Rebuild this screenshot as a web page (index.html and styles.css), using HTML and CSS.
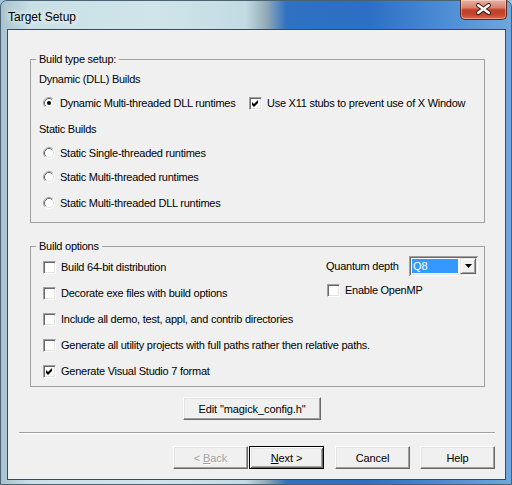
FILE: index.html
```html
<!DOCTYPE html>
<html>
<head>
<meta charset="utf-8">
<link rel="stylesheet" href="styles.css">
</head>
<body>
<div class="window">
  <div class="titlebar">
    <span class="title">Target Setup</span>
    <div class="close">
      <svg width="47" height="19" viewBox="0 0 47 19">
        <path d="M18 5 L29 13 M29 5 L18 13" stroke="#3a1c16" stroke-width="4.6" stroke-linecap="round" fill="none"/>
        <path d="M18 5 L29 13 M29 5 L18 13" stroke="#ffffff" stroke-width="2.6" stroke-linecap="round" fill="none"/>
      </svg>
    </div>
  </div>
  <div class="client">
    <fieldset class="group">
      <legend>Build type setup:</legend>
      <div class="type-body">
        <div class="row">Dynamic (DLL) Builds</div>
        <div class="row opt">
          <label class="choice radio-wide">
            <svg class="rb" width="12" height="12" viewBox="0 0 12 12">
              <circle cx="6" cy="6" r="5" fill="#fff"/>
              <path d="M2.11 9.89 A5.5 5.5 0 0 1 9.89 2.11" stroke="#a0a0a0" fill="none"/>
              <path d="M9.89 2.11 A5.5 5.5 0 0 1 2.11 9.89" stroke="#ffffff" fill="none"/>
              <path d="M2.82 9.18 A4.5 4.5 0 0 1 9.18 2.82" stroke="#696969" fill="none"/>
              <path d="M9.18 2.82 A4.5 4.5 0 0 1 2.82 9.18" stroke="#e3e3e3" fill="none"/>
              <circle cx="6" cy="6" r="2" fill="#000"/>
            </svg>
            <span>Dynamic Multi-threaded DLL runtimes</span>
          </label>
          <label class="choice">
            <span class="cb"><svg width="7" height="7" viewBox="0 0 7 7"><path d="M0 2 L2 4 L6 0 L6 3 L2 7 L0 5 Z" fill="#000"/></svg></span>
            <span>Use X11 stubs to prevent use of X Window</span>
          </label>
        </div>
        <div class="row sec">Static Builds</div>
        <div class="row opt">
          <label class="choice">
            <svg class="rb" width="12" height="12" viewBox="0 0 12 12">
              <circle cx="6" cy="6" r="5" fill="#fff"/>
              <path d="M2.11 9.89 A5.5 5.5 0 0 1 9.89 2.11" stroke="#a0a0a0" fill="none"/>
              <path d="M9.89 2.11 A5.5 5.5 0 0 1 2.11 9.89" stroke="#ffffff" fill="none"/>
              <path d="M2.82 9.18 A4.5 4.5 0 0 1 9.18 2.82" stroke="#696969" fill="none"/>
              <path d="M9.18 2.82 A4.5 4.5 0 0 1 2.82 9.18" stroke="#e3e3e3" fill="none"/>
            </svg>
            <span>Static Single-threaded runtimes</span>
          </label>
        </div>
        <div class="row opt">
          <label class="choice">
            <svg class="rb" width="12" height="12" viewBox="0 0 12 12">
              <circle cx="6" cy="6" r="5" fill="#fff"/>
              <path d="M2.11 9.89 A5.5 5.5 0 0 1 9.89 2.11" stroke="#a0a0a0" fill="none"/>
              <path d="M9.89 2.11 A5.5 5.5 0 0 1 2.11 9.89" stroke="#ffffff" fill="none"/>
              <path d="M2.82 9.18 A4.5 4.5 0 0 1 9.18 2.82" stroke="#696969" fill="none"/>
              <path d="M9.18 2.82 A4.5 4.5 0 0 1 2.82 9.18" stroke="#e3e3e3" fill="none"/>
            </svg>
            <span>Static Multi-threaded runtimes</span>
          </label>
        </div>
        <div class="row opt sec">
          <label class="choice">
            <svg class="rb" width="12" height="12" viewBox="0 0 12 12">
              <circle cx="6" cy="6" r="5" fill="#fff"/>
              <path d="M2.11 9.89 A5.5 5.5 0 0 1 9.89 2.11" stroke="#a0a0a0" fill="none"/>
              <path d="M9.89 2.11 A5.5 5.5 0 0 1 2.11 9.89" stroke="#ffffff" fill="none"/>
              <path d="M2.82 9.18 A4.5 4.5 0 0 1 9.18 2.82" stroke="#696969" fill="none"/>
              <path d="M9.18 2.82 A4.5 4.5 0 0 1 2.82 9.18" stroke="#e3e3e3" fill="none"/>
            </svg>
            <span>Static Multi-threaded DLL runtimes</span>
          </label>
        </div>
      </div>
    </fieldset>

    <fieldset class="group group-opts">
      <legend>Build options</legend>
      <div class="opts-body">
        <label class="choice">
          <span class="cb"></span>
          <span>Build 64-bit distribution</span>
        </label>
        <div class="quantum">
          <span>Quantum depth</span>
          <div class="combo">
            <span class="combo-val">Q8</span>
            <span class="combo-btn"><svg width="7" height="4" viewBox="0 0 7 4"><path d="M0 0 H7 L3.5 4 Z" fill="#000"/></svg></span>
          </div>
        </div>
        <label class="choice">
          <span class="cb"></span>
          <span>Decorate exe files with build options</span>
        </label>
        <label class="choice openmp">
          <span class="cb"></span>
          <span>Enable OpenMP</span>
        </label>
        <label class="choice full">
          <span class="cb"></span>
          <span>Include all demo, test, appl, and contrib directories</span>
        </label>
        <label class="choice full">
          <span class="cb"></span>
          <span>Generate all utility projects with full paths rather then relative paths.</span>
        </label>
        <label class="choice full">
          <span class="cb"><svg width="7" height="7" viewBox="0 0 7 7"><path d="M0 2 L2 4 L6 0 L6 3 L2 7 L0 5 Z" fill="#000"/></svg></span>
          <span>Generate Visual Studio 7 format</span>
        </label>
      </div>
    </fieldset>

    <div class="btn edit"><span>Edit "magick_config.h"</span></div>
    <div class="separator"></div>
    <div class="actions">
      <div class="btn disabled"><span>&lt; <u>B</u>ack</span></div>
      <div class="btn default"><span><u>N</u>ext &gt;</span></div>
      <div class="btn cancel"><span>Cancel</span></div>
      <div class="btn help"><span>Help</span></div>
    </div>
  </div>
</div>
</body>
</html>
```

FILE: styles.css
```css
html, body {
  margin: 0;
  padding: 0;
}
body {
  width: 512px;
  height: 485px;
  overflow: hidden;
  background: #9fc3d9;
  font-family: "Liberation Sans", Arial, sans-serif;
  font-size: 11px;
  letter-spacing: -0.25px;
  color: #000;
}
.window {
  width: 512px;
  height: 485px;
  box-sizing: border-box;
  display: flex;
  flex-direction: column;
  border-radius: 7px 7px 0 0;
  border: 1px solid #4b6274;
  background: linear-gradient(90deg, #a7c3cf 0%, #c8e0e6 6%, #cfe5ea 30%, #c2dbe2 48%, #93aab8 52%, #2f71c2 56%, #2c6fc4 72%, #4f8fd6 88%, #6fa6de 100%);
}
.titlebar {
  height: 28px;
  display: flex;
  align-items: flex-start;
}
.title {
  margin: 9px 0 0 7px;
  font-size: 12px;
  line-height: 14px;
  letter-spacing: 0;
  color: #000;
  text-shadow: 0 0 6px #fff, 0 0 10px rgba(255,255,255,0.8);
}
.close {
  margin: -1px 4px 0 auto;
  width: 47px;
  height: 20px;
  box-sizing: border-box;
  border: 1px solid #5a2820;
  border-top: none;
  border-radius: 0 0 5px 5px;
  background: linear-gradient(180deg, #e8b1a3 0%, #d9826e 40%, #c2412b 52%, #c4432c 75%, #e0694a 100%);
  box-shadow: inset 0 0 0 1px rgba(255,255,255,0.35);
  display: flex;
  align-items: center;
  justify-content: center;
}
.close svg {
  display: block;
}
.client {
  margin: 0 5px 0 6px;
  height: 451px;
  box-sizing: border-box;
  border: 1px solid #3a4a5c;
  background: #f0f0f0;
  display: flex;
  flex-direction: column;
}
.group {
  margin: 22px 20px 0 22px;
  padding: 0;
  border: 1px solid #a0a0a0;
  min-width: 0;
}
.group legend {
  margin-left: 5px;
  padding: 0 3px;
  line-height: 14px;
}
.group-opts {
  margin-top: 16px;
}
.type-body {
  padding: 6px 0 12px 8px;
  display: flex;
  flex-direction: column;
  gap: 10px;
}
.row {
  height: 14px;
  line-height: 14px;
  display: flex;
  align-items: center;
  white-space: nowrap;
}
.row.sec {
  margin-top: 2px;
}
.row.opt {
  padding-left: 4px;
}
.choice {
  display: flex;
  align-items: center;
  white-space: nowrap;
  line-height: 14px;
}
.radio-wide {
  width: 206px;
}
.rb {
  display: block;
  margin-right: 5px;
  flex: none;
}
.cb {
  width: 13px;
  height: 13px;
  box-sizing: border-box;
  flex: none;
  background: #fff;
  border: 1px solid;
  border-color: #a0a0a0 #ffffff #ffffff #a0a0a0;
  box-shadow: inset 1px 1px #696969, inset -1px -1px #e3e3e3;
  margin-right: 5px;
  display: flex;
  align-items: center;
  justify-content: center;
}
.cb svg {
  display: block;
}
.opts-body {
  padding: 1px 6px 2px 12px;
  display: grid;
  grid-template-columns: 1fr 152px;
  grid-auto-rows: 26px;
  align-items: center;
}
.full {
  grid-column: 1 / -1;
}
.quantum {
  display: flex;
  align-items: center;
  white-space: nowrap;
  margin-bottom: 2px;
}
.combo {
  margin-left: auto;
  width: 69px;
  height: 20px;
  box-sizing: border-box;
  padding: 2px;
  background: #fff;
  box-shadow: inset 1px 1px #a0a0a0, inset -1px -1px #ffffff, inset 2px 2px #696969, inset -2px -2px #e3e3e3;
  display: flex;
}
.combo-val {
  flex: 1;
  margin: 1px 2px 1px 1px;
  padding-left: 1px;
  background: #3399ff;
  color: #fff;
  line-height: 14px;
  letter-spacing: 0;
}
.combo-btn {
  width: 16px;
  height: 16px;
  box-sizing: border-box;
  background: #f0f0f0;
  border: 1px solid;
  border-color: #e3e3e3 #696969 #696969 #e3e3e3;
  box-shadow: inset 1px 1px #fff, inset -1px -1px #a0a0a0;
  display: flex;
  align-items: center;
  justify-content: center;
}
.combo-btn svg {
  display: block;
}
.openmp {
  align-self: start;
  margin: 3px 0 0 1px;
}
.btn {
  width: 75px;
  height: 23px;
  box-sizing: border-box;
  background: #f0f0f0;
  border: 1px solid;
  border-color: #ffffff #696969 #696969 #ffffff;
  box-shadow: inset -1px -1px #a0a0a0, inset 1px 1px #e3e3e3;
  display: flex;
  align-items: center;
  justify-content: center;
  white-space: nowrap;
  letter-spacing: -0.1px;
}
.edit {
  width: 138px;
  margin: 10px 0 0 175px;
}
.separator {
  margin: 12px 10px 0 11px;
  height: 1px;
  background: #a0a0a0;
  border-bottom: 1px solid #ffffff;
}
.actions {
  margin-top: 12px;
  padding-right: 10px;
  display: flex;
  justify-content: flex-end;
}
.disabled {
  color: #a0a0a0;
  text-shadow: 1px 1px #ffffff;
}
.default {
  margin-left: 1px;
  border: 1px solid #000;
  box-shadow: inset 1px 1px #ffffff, inset -1px -1px #696969, inset 2px 2px #e3e3e3, inset -2px -2px #a0a0a0;
}
.cancel {
  margin-left: 11px;
}
.help {
  margin-left: 10px;
}
```
